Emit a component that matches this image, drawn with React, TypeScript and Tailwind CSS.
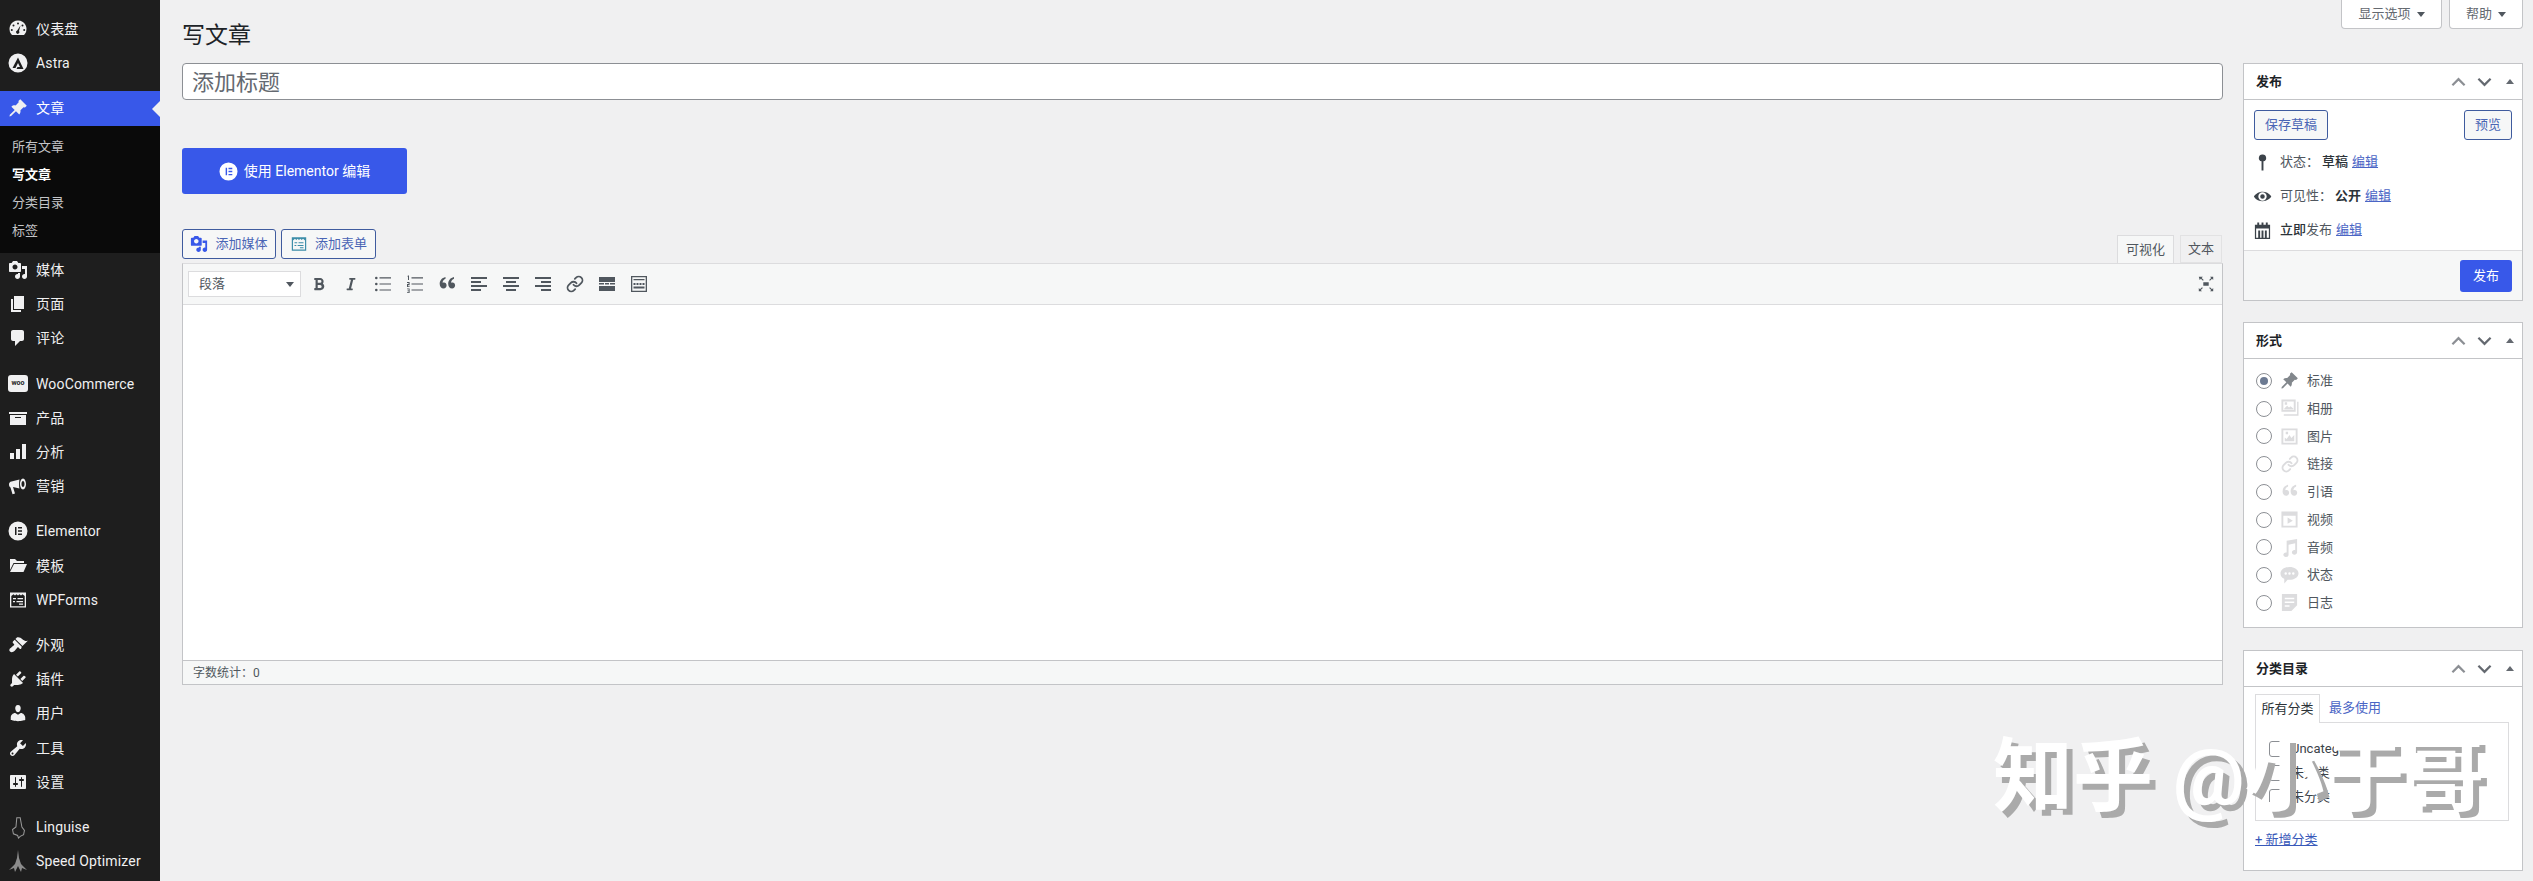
import React from "react";
import { Link as LinkIcon } from "lucide-react";
import { FaBold, FaItalic } from "react-icons/fa";

const FONT = 'Roboto,"Noto Sans CJK SC",sans-serif';

function D({ d, size = 20, className = "" }: { d: string; size?: number; className?: string }) {
  return (
    <svg viewBox="0 0 20 20" width={size} height={size} className={className} fill="currentColor" fillRule="evenodd">
      <path d={d} />
    </svg>
  );
}

const P = {
  pin: "M10.44 3.02l1.82-1.82 6.53 6.53-1.82 1.82-1.42-.36-3.1 3.1c.26 1.55-.1 3.1-1.2 4.2l-3.3-3.3-4.9 4.9-1.55.3.3-1.55 4.9-4.9-3.3-3.3c1.1-1.1 2.65-1.46 4.2-1.2l3.1-3.1z",
  media:
    "M13 11V4c0-.55-.45-1-1-1h-1.67L9 1H5L3.67 3H2c-.55 0-1 .45-1 1v7c0 .55.45 1 1 1h10c.55 0 1-.45 1-1zM7 4.5c1.38 0 2.5 1.12 2.5 2.5S8.38 9.5 7 9.5 4.5 8.38 4.5 7 5.62 4.5 7 4.5zM14 6h5v10.5c0 1.38-1.12 2.5-2.5 2.5S14 17.88 14 16.5s1.12-2.5 2.5-2.5c.17 0 .34.02.5.05V9h-3V6zm-4 8.05V13h2v3.5c0 1.38-1.12 2.5-2.5 2.5S7 17.88 7 16.5 8.12 14 9.5 14c.17 0 .34.02.5.05z",
  page: "M6 15V2h10v13H6zm-1 1h8v2H3V5h2v11z",
  comment: "M5 2h9c1.1 0 2 .9 2 2v7c0 1.1-.9 2-2 2h-2l-5 5v-5H5c-1.1 0-2-.9-2-2V4c0-1.1.9-2 2-2z",
  archive: "M19 4v2H1V4h18zM2 7h16v10H2V7zm11 3V9H7v1h6z",
  bars: "M2 11h4v6H2zM8 7h4v10H8zM14 2h4v15h-4z",
  mega: "M18 8c0 2.5-1.3 5.5-3 5.5S12 10.500 12 8s1.300-5.500 3-5.500S18 5.500 18 8zM15 5c-.9 0-1.500 1.400-1.500 3s.6 3 1.500 3 1.500-1.400 1.500-3-.6-3-1.500-3zM11.500 3.500C11 5 11 11 11.500 12.500L5 11v-.1L7 17.500l-2.500.8-2-6.800C1.500 11 1 9.800 1 8.500c0-1.600 1-3 2.500-3z",
  folder: "M2 3h5l2 2h7v2H5.500L2 14V3zM6 8h13l-3.500 8H2z",
  brush:
    "M14.48 11.06L7.41 3.99l1.5-1.5c.5-.56 2.3-.47 3.51.32 1.21.8 1.43 1.28 2.91 2.1 1.18.64 2.45 1.26 4.45.85zm-.71.71L6.7 4.7 4.93 6.47c-.39.39-.39 1.02 0 1.41l1.06 1.06c.39.39.39 1.03 0 1.42-.6.6-1.43 1.11-2.21 1.69-.35.26-.7.53-1.01.84C1.43 13.23.75 15.37 2 16.62c1.25 1.25 3.39.57 4.72-.77.31-.31.58-.66.84-1.01.58-.78 1.09-1.61 1.69-2.21.39-.39 1.03-.39 1.42 0l1.06 1.06c.39.39 1.02.39 1.41 0z",
  plug:
    "M13.11 4.36L9.87 7.6 8 5.73l3.24-3.24c.35-.34 1.05-.2 1.56.32.52.51.66 1.21.31 1.55zm-8 1.77l.91-1.12 9.01 9.01-1.19.84c-.71.71-2.63 1.16-3.82 1.16H6.14L4.9 17.26c-.59.59-1.54.59-2.12 0-.59-.58-.59-1.53 0-2.12l1.24-1.24v-3.88c0-1.13.4-3.19 1.09-3.89zm7.26 3.97l3.24-3.24c.34-.35 1.04-.21 1.55.31.52.51.66 1.21.31 1.55l-3.24 3.25z",
  user:
    "M10 9.25c-2.27 0-2.73-3.44-2.73-3.44C7 4.02 7.82 2 9.97 2c2.16 0 2.98 2.02 2.71 3.81 0 0-.41 3.44-2.68 3.44zm0 2.57L12.72 10c2.39 0 4.52 2.33 4.52 4.53v2.49s-3.65 1.13-7.24 1.13c-3.65 0-7.24-1.13-7.24-1.13v-2.49c0-2.25 1.94-4.48 4.47-4.48z",
  tools:
    "M16.68 9.77c-1.34 1.34-3.3 1.67-4.95.99l-5.41 6.52c-.99.99-2.59.99-3.58 0s-.99-2.59 0-3.57l6.52-5.42c-.68-1.65-.35-3.61.99-4.95 1.28-1.28 3.12-1.62 4.72-1.06l-2.89 2.89 2.82 2.82 2.86-2.87c.53 1.58.18 3.39-1.08 4.65zM3.81 16.21c.4.39 1.04.39 1.43 0 .4-.4.4-1.04 0-1.43-.39-.4-1.03-.4-1.43 0-.39.39-.39 1.03 0 1.43z",
  settings:
    "M18 16V4c0-.55-.45-1-1-1H3c-.55 0-1 .45-1 1v12c0 .55.45 1 1 1h14c.55 0 1-.45 1-1zM8 11h1c.55 0 1 .45 1 1s-.45 1-1 1H8v1.5c0 .28-.22.5-.5.5s-.5-.22-.5-.5V13H6c-.55 0-1-.45-1-1s.45-1 1-1h1V5.500c0-.28.22-.5.5-.5s.5.22.5.5V11zm5-2h-1c-.55 0-1-.45-1-1s.45-1 1-1h1V5.500c0-.28.22-.5.5-.5s.5.22.5.5V7h1c.55 0 1 .45 1 1s-.45 1-1 1h-1v5.500c0 .28-.22.5-.5.5s-.5-.22-.5-.5V9z",
  dash:
    "M10 1.500a8.500 8.500 0 0 0-7 13.300L4 16h12l1-1.200A8.500 8.500 0 0 0 10 1.500zM10 3.500a1 1 0 1 1 0 2 1 1 0 0 1 0-2zM5.500 5.500a1 1 0 1 1 0 2 1 1 0 0 1 0-2zM14.500 5.500a1 1 0 1 1 0 2 1 1 0 0 1 0-2zM3.800 10a1 1 0 1 1 0 2 1 1 0 0 1 0-2zM16.200 10a1 1 0 1 1 0 2 1 1 0 0 1 0-2zM12.500 6.500L11 12a1.700 1.700 0 1 1-1.800-.5z",
  astra: "M10 .5a9.500 9.500 0 1 1 0 19 9.500 9.500 0 0 1 0-19zM10 4.500L4.500 15h3l2.500-5 2 4-2.500.1-1 1.900h7z",
  elementor: "M10 .5a9.500 9.500 0 1 1 0 19 9.500 9.500 0 0 1 0-19zM7 6v8h1.500V6zM10 6v1.500h4V6zM10 9.250v1.500h4v-1.500zM10 12.500V14h4v-1.500z",
  forms:
    "M2 2.500h16v15H2zM3.300 6v10.200h13.400V6l-2.200-1.800L13 5.500l-1.500-1.300L10 5.500 8.500 4.200 7 5.500 5.500 4.200zM5 8h3v1.200H5zM9.500 8H15v1.200H9.500zM5 11h2v1.200H5zM8.500 11H15v1.200H8.500zM11 13.500h4v1.200h-4z",
  gallery: "M1.500 .5h15v13h-15zM4 16h14V3h1.500v14.500H4zM3.500 2.500v9h11v-9zM4.500 10l3-3 2 2L11 7.500l3 2.500v1H4.500zM5 3.500h2.500V6H5z",
  image: "M1.500 1.500h17v17h-17zM3.500 3.500v13h13v-13zM5 15V11l2 1.500 3-4 2 3 3-3V15zM6 5h2.500v2.500H6z",
  video: "M1.500 1.500h17v17h-17zM3.500 6v10.500h13V6zM8 8l5.500 3.200L8 14.500z",
  audio: "M7 3l11-2v14c0 1.500-1.300 2.500-2.800 2.500s-2.700-1-2.700-2.300 1.300-2.500 2.800-2.500c.3 0 .5 0 .7.100V5.500L9 7v10.500C9 19 7.700 20 6.200 20S3.500 19 3.500 17.700s1.300-2.500 2.800-2.500c.2 0 .5 0 .7.100z",
  status: "M10 1c5 0 9.500 2.800 9.500 6.800s-4.500 6.700-9.500 6.700H8l-3.500 4v-5C2 12.500 .5 10.200 .5 7.800.5 3.800 5 1 10 1zM6 6.500a1.300 1.300 0 1 0 0 2.600 1.300 1.300 0 0 0 0-2.600zM10 6.500a1.300 1.300 0 1 0 0 2.600 1.300 1.300 0 0 0 0-2.600zM14 6.500a1.300 1.300 0 1 0 0 2.600 1.300 1.300 0 0 0 0-2.600z",
  aside: "M2 1h16v12l-6 6H2zM5 5v1.500h10V5zM5 9v1.500h10V9zM5 13v1.500h5V13z",
  quote: "M8.500 3v1.700C6.500 5.500 5.600 7 5.600 8.700c.4-.2.900-.3 1.400-.3 1.500 0 2.600 1.200 2.600 2.900S8.400 14.500 6.600 14.500C4.300 14.500 2.700 12.700 2.700 10c0-3.600 2.200-6.200 5.800-7zM17 3v1.700c-2 .8-2.900 2.300-2.900 4 .4-.2.900-.3 1.400-.3 1.500 0 2.600 1.200 2.600 2.900s-1.200 3.200-3 3.200c-2.300 0-3.900-1.800-3.900-4.500 0-3.600 2.200-6.200 5.800-7z",
  ul: "M2 4a1.300 1.300 0 1 1 2.600 0A1.300 1.300 0 0 1 2 4zM6.500 3.300H18v1.200H6.500zM2 10a1.300 1.300 0 1 1 2.600 0A1.300 1.300 0 0 1 2 10zM6.500 9.400H18v1.200H6.500zM2 16a1.300 1.300 0 1 1 2.600 0A1.300 1.300 0 0 1 2 16zM6.500 15.400H18v1.200H6.500z",
  ol: "M6.500 3.300H18v1.200H6.500zM6.500 9.400H18v1.200H6.500zM6.500 15.400H18v1.200H6.500zM3 1.500h1V6H3V2.500H2.200zM2 8h2.600v3.200H3v1h1.600V13H2V9.900h1.600V9H2zM2 14.500h2.600V19H2v-.8h1.700v-1H2.500v-.7h1.200v-1.200H2z",
  left: "M2 3h16v2H2zM2 7h10v2H2zM2 11h16v2H2zM2 15h10v2H2z",
  center: "M2 3h16v2H2zM5 7h10v2H5zM2 11h16v2H2zM5 15h10v2H5z",
  right: "M2 3h16v2H2zM8 7h10v2H8zM2 11h16v2H2zM8 15h10v2H8z",
  more: "M2 3h16v5H2zM2 9h5v1.500H2zM8 9h4v1.500H8zM13 9h5v1.500h-5zM2 12h16v5H2z",
  sink: "M2 2h16v16H2zM3.300 3.300v13.400h13.400V3.300zM4.500 5h11v1.200h-11zM4.500 9h2v2h-2zM7.500 9h2v2h-2zM10.500 9h2v2h-2zM13.500 9h2v2h-2zM4.500 12.500h11v2h-11z",
  full: "M2 2h4.500L5.200 3.300 7.500 5.600 6.600 6.500 4.300 4.200 3 5.500zM18 2v3.500l-1.300-1.300-2.300 2.300-.9-.9 2.300-2.300L14.500 2zM2 18v-3.500l1.300 1.300 2.300-2.300.9.900-2.300 2.300L5.500 18zM18 18h-3.500l1.300-1.300-2.300-2.300.9-.9 2.300 2.300 1.300-1.300zM7 8h6v4H7z",
  mapPin: "M10 1.500a3.700 3.700 0 0 1 1 7.300V18.500H9V8.800a3.700 3.700 0 0 1 1-7.300z",
  eye: "M19 9.500C15.500 4.500 8.500 3.500 3.800 7c-1 .7-1.900 1.500-2.600 2.500-.2.300-.2.700 0 1 3.500 5 10.500 6 15.200 2.500 1-.7 1.900-1.500 2.600-2.500.2-.3.2-.7 0-1zM10 5.600a4.400 4.400 0 1 1 0 8.800 4.400 4.400 0 0 1 0-8.800zM10 7.600a2.400 2.400 0 1 0 0 4.800 2.400 2.400 0 0 0 0-4.800z",
  cal: "M2 4h2.500V1.500h2V4h2.500V1.500h2V4h2.500V1.500h2V4H18v15H2zM3.300 8v9.700h2.200V10h2v7.700h1.500V10h2v7.700h1.500V10h2v7.700h2.200V8z",
};

function MenuItem({ icon, label, active, custom }: { icon?: string; label: string; active?: boolean; custom?: React.ReactNode }) {
  return (
    <div className={`relative flex items-center ${active ? "h-[35px] bg-[#3858e9] text-white" : "h-[34.2px] text-[#f0f0f1]"}`}>
      <div className="flex w-[36px] shrink-0 items-center justify-center text-[#f0f0f1]">
        {custom ?? <D d={icon!} size={20} />}
      </div>
      <span className="text-[14px] leading-none tracking-[0.15px]">{label}</span>
      {active && (
        <span className="absolute right-0 top-[10px] h-0 w-0 border-y-[8px] border-r-[8px] border-y-transparent border-r-[#f0f0f1]" />
      )}
    </div>
  );
}

function Sep() {
  return <div className="h-[11px]" />;
}

function Sidebar() {
  return (
    <aside className="flex w-[160px] shrink-0 flex-col bg-[#1e1e1e] pt-[12px]">
      <MenuItem icon={P.dash} label="仪表盘" />
      <MenuItem icon={P.astra} label="Astra" />
      <div className="h-[10.6px]" />
      <MenuItem icon={P.pin} label="文章" active />
      <div className="flex h-[127px] flex-col bg-[#0a0a0a] pl-[12px] pt-[7px] text-[13px] leading-[28px] text-[#c3c4c7]">
        <span>所有文章</span>
        <span className="font-bold text-white">写文章</span>
        <span>分类目录</span>
        <span>标签</span>
      </div>
      <MenuItem icon={P.media} label="媒体" />
      <MenuItem icon={P.page} label="页面" />
      <MenuItem icon={P.comment} label="评论" />
      <Sep />
      <MenuItem
        label="WooCommerce"
        custom={
          <span className="flex h-[17px] w-[20px] items-center justify-center rounded-[3px] bg-[#f0f0f1] text-[7px] font-bold text-[#1e1e1e]">
            woo
          </span>
        }
      />
      <MenuItem icon={P.archive} label="产品" />
      <MenuItem icon={P.bars} label="分析" />
      <MenuItem icon={P.mega} label="营销" />
      <Sep />
      <MenuItem icon={P.elementor} label="Elementor" />
      <MenuItem icon={P.folder} label="模板" />
      <MenuItem icon={P.forms} label="WPForms" />
      <Sep />
      <MenuItem icon={P.brush} label="外观" />
      <MenuItem icon={P.plug} label="插件" />
      <MenuItem icon={P.user} label="用户" />
      <MenuItem icon={P.tools} label="工具" />
      <MenuItem icon={P.settings} label="设置" />
      <Sep />
      <MenuItem
        label="Linguise"
        custom={
          <svg viewBox="0 0 20 26" width="17" height="24" fill="none" stroke="#9a9a9a" strokeWidth="1.2">
            <path d="M8 2h4l2 11 3 4-1 5-4 2-2 2-1-3-5-2-1-5 4-3z" />
          </svg>
        }
      />
      <MenuItem
        label="Speed Optimizer"
        custom={
          <svg viewBox="0 0 20 22" width="20" height="22" fill="#8c8c8c">
            <path d="M10 0l1 8 2 6 6 6-5-2-1 4-3-6-3 6-1-4-5 2 6-6 2-6z" />
          </svg>
        }
      />
    </aside>
  );
}

function Toggle({ children, w }: { children: React.ReactNode; w: string }) {
  return (
    <div className={`flex h-[29px] items-center justify-center gap-[6px] rounded-b-[4px] border border-t-0 border-[#c3c4c7] bg-white text-[13px] text-[#646970] ${w}`}>
      {children}
      <span className="h-0 w-0 border-x-[4px] border-t-[5px] border-x-transparent border-t-[#50575e]" />
    </div>
  );
}

function OutlineBtn({ children, className = "" }: { children: React.ReactNode; className?: string }) {
  return (
    <div className={`flex h-[30px] items-center justify-center rounded-[3px] border border-[#3f5b9e] bg-[#f6f7f7] text-[13px] text-[#4a65b5] ${className}`}>
      {children}
    </div>
  );
}

function Tool({ d, children }: { d?: string; children?: React.ReactNode }) {
  return (
    <div className="flex h-[28px] w-[32px] items-center justify-center text-[#50575e]">
      {children ?? <D d={d!} size={20} />}
    </div>
  );
}

function Editor() {
  return (
    <div className="flex min-w-0 flex-1 flex-col">
      <h1 className="h-[55px] pt-[18px] text-[23px] font-normal leading-[36px] text-[#1d2327]">写文章</h1>
      <div className="mt-[8px] flex h-[37px] items-center rounded-[4px] border border-[#8c8f94] bg-white px-[9px] pt-[1px] text-[22px] text-[#646970]">
        添加标题
      </div>
      <div className="mt-[48px] flex h-[46px] w-[225px] items-center justify-center gap-[6px] rounded-[3px] bg-[#3858e9] text-[14px] text-white">
        <D d={P.elementor} size={19} />
        <span>使用 Elementor 编辑</span>
      </div>
      <div className="mt-[35px] flex h-[34px] items-start gap-[5px]">
        <OutlineBtn className="w-[94px] gap-[7px] text-[#4a65b5]">
          <span className="text-[#3858e9]"><D d={P.media} size={18} /></span>
          添加媒体
        </OutlineBtn>
        <OutlineBtn className="w-[95px] gap-[7px]">
          <span className="text-[#3a8ca8]"><D d={P.forms} size={18} /></span>
          添加表单
        </OutlineBtn>
        <div className="ml-auto flex h-[34px] items-end pr-[1px]">
          <div className="-mb-px flex h-[29px] w-[57px] items-center justify-center border border-b-0 border-[#dcdcde] bg-[#f6f7f7] pb-[1px] text-[13px] text-[#50575e]">
            可视化
          </div>
          <div className="ml-[6px] flex h-[28px] w-[42px] items-center justify-center border border-[#e2e2e3] bg-[#f0f0f1] text-[13px] text-[#50575e]">
            文本
          </div>
        </div>
      </div>
      <div className="flex h-[422px] flex-col border border-[#c3c4c7] border-t-[#dcdcde] bg-white">
        <div className="flex h-[41px] items-center border-b border-[#dcdcde] bg-[#f6f7f7] pl-[5px] pr-[5px]">
          <div className="mr-[2px] flex h-[26px] w-[113px] items-center justify-between border border-[#dcdcde] bg-white pl-[10px] pr-[6px] text-[13px] text-[#50575e]">
            段落
            <span className="h-0 w-0 border-x-[4px] border-t-[5px] border-x-transparent border-t-[#50575e]" />
          </div>
          <Tool><FaBold size={14} /></Tool>
          <Tool><FaItalic size={14} /></Tool>
          <Tool d={P.ul} />
          <Tool d={P.ol} />
          <Tool d={P.quote} />
          <Tool d={P.left} />
          <Tool d={P.center} />
          <Tool d={P.right} />
          <Tool><LinkIcon size={18} strokeWidth={2.4} /></Tool>
          <Tool d={P.more} />
          <Tool d={P.sink} />
          <div className="ml-auto pr-[2px]">
            <D d={P.full} size={18} className="text-[#50575e]" />
          </div>
        </div>
        <div className="flex-1" />
        <div className="flex h-[24px] items-center border-t border-[#c3c4c7] bg-[#f6f7f7] pl-[10px] text-[12px] text-[#50575e]">
          字数统计：0
        </div>
      </div>
    </div>
  );
}

function Chev({ up }: { up?: boolean }) {
  return (
    <svg viewBox="0 0 16 10" width="15" height="10" fill="none" stroke={up ? "#8c8f94" : "#646970"} strokeWidth="2.4">
      <path d={up ? "M1.500 8.500L8 2l6.500 6.500" : "M1.500 1.500L8 8l6.500-6.500"} />
    </svg>
  );
}

function Box({ title, children, className = "" }: { title: string; children: React.ReactNode; className?: string }) {
  return (
    <section className={`flex flex-col border border-[#c3c4c7] bg-white ${className}`}>
      <header className="flex h-[36px] shrink-0 items-center justify-between border-b border-[#c3c4c7] pl-[12px] pr-[6px]">
        <span className="text-[13px] font-bold text-[#1d2327]">{title}</span>
        <div className="flex items-center gap-[11px]">
          <Chev up />
          <Chev />
          <span className="ml-[3px] mr-[2px] h-0 w-0 border-x-[4px] border-b-[5px] border-x-transparent border-b-[#646970]" />
        </div>
      </header>
      {children}
    </section>
  );
}

function PubRow({ icon, size = 18, children }: { icon: string; size?: number; children: React.ReactNode }) {
  return (
    <div className="flex h-[34px] items-center text-[13px] text-[#50575e]">
      <div className="flex w-[36px] shrink-0 items-center justify-center pl-[1px] text-[#3c434a]">
        <D d={icon} size={size} />
      </div>
      {children}
    </div>
  );
}

const A = ({ children }: { children: React.ReactNode }) => (
  <span className="ml-[4px] text-[#4a65c5] underline">{children}</span>
);

const formats: [string, string][] = [
  [P.pin, "标准"],
  [P.gallery, "相册"],
  [P.image, "图片"],
  ["", "链接"],
  [P.quote, "引语"],
  [P.video, "视频"],
  [P.audio, "音频"],
  [P.status, "状态"],
  [P.aside, "日志"],
];

function Right() {
  return (
    <div className="flex w-[280px] shrink-0 flex-col">
      <div className="flex h-[29px] justify-end gap-[7px]">
        <Toggle w="w-[101px]">显示选项</Toggle>
        <Toggle w="w-[74px]">帮助</Toggle>
      </div>
      <Box title="发布" className="mt-[34px] h-[238px]">
        <div className="flex justify-between px-[10px] pt-[10px]">
          <OutlineBtn className="w-[74px]">保存草稿</OutlineBtn>
          <OutlineBtn className="w-[48px]">预览</OutlineBtn>
        </div>
        <div className="mt-[5px] flex flex-col pb-[3px]">
          <PubRow icon={P.mapPin} size={19}>
            状态：<b className="ml-[3px] font-medium text-[#2c3338]">草稿</b><A>编辑</A>
          </PubRow>
          <PubRow icon={P.eye} size={19}>
            可见性：<b className="ml-[3px] font-bold text-[#2c3338]">公开</b><A>编辑</A>
          </PubRow>
          <PubRow icon={P.cal} size={19}>
            <span className="font-medium text-[#2c3338]">立即</span>发布<A>编辑</A>
          </PubRow>
        </div>
        <div className="mt-auto flex h-[53px] items-center justify-end border-t border-[#dcdcde] bg-[#f6f7f7] pr-[10px]">
          <div className="flex h-[32px] w-[52px] items-center justify-center rounded-[3px] bg-[#3858e9] text-[13px] text-white">发布</div>
        </div>
      </Box>
      <Box title="形式" className="mt-[21px] h-[306px]">
        <div className="flex flex-col pl-[12px] pt-[8px]">
          {formats.map(([d, label], i) => (
            <div key={label} className="flex h-[27.75px] items-center text-[13px] text-[#50575e]">
              <span className="flex h-[16px] w-[16px] items-center justify-center rounded-full border border-[#8c8f94] bg-white">
                {i === 0 && <span className="h-[8px] w-[8px] rounded-full bg-[#6c7a92]" />}
              </span>
              <span className={`ml-[8px] mr-[8px] flex w-[19px] justify-center ${i === 0 ? "text-[#82878c]" : "text-[#dcdcde]"}`}>
                {d ? <D d={d} size={19} /> : <LinkIcon size={18} strokeWidth={2.6} />}
              </span>
              {label}
            </div>
          ))}
        </div>
      </Box>
      <Box title="分类目录" className="mt-[22px] h-[221px]">
        <div className="px-[11px] pt-[7px]">
          <div className="flex h-[28px] items-stretch text-[13px]">
            <div className="z-10 -mb-px flex w-[65px] items-center justify-center border border-b-0 border-[#dcdcde] bg-white text-[#2c3338]">所有分类</div>
            <div className="flex items-center pl-[9px] text-[#4a65c5]">最多使用</div>
          </div>
          <div className="flex h-[99px] w-[254px] flex-col border border-[#dcdcde] pl-[13px] pt-[14px] text-[13px] text-[#3c434a]">
            {["Uncategorized", "未分类", "未分类"].map((t, i) => (
              <div key={i} className="flex h-[24px] items-center gap-[6px]">
                <span className="h-[16px] w-[16px] rounded-[3px] border border-[#8c8f94] bg-white" />
                {t}
              </div>
            ))}
          </div>
          <div className="mt-[9px] text-[13px] text-[#3858b9] underline">+ 新增分类</div>
        </div>
      </Box>
    </div>
  );
}

export default function App() {
  return (
    <div className="relative flex h-[881px] w-[2533px] overflow-hidden bg-[#f0f0f1]" style={{ fontFamily: FONT }}>
      <Sidebar />
      <main className="flex min-w-0 flex-1 pl-[22px] pr-[10px]">
        <Editor />
        <div className="w-[20px] shrink-0" />
        <Right />
      </main>
      <div className="pointer-events-none absolute left-[1993px] top-[722px] whitespace-nowrap text-[80px] font-bold leading-[110px] text-white [text-shadow:6px_6px_0_#aaaaaa]">
        知乎 @小于哥
      </div>
    </div>
  );
}
